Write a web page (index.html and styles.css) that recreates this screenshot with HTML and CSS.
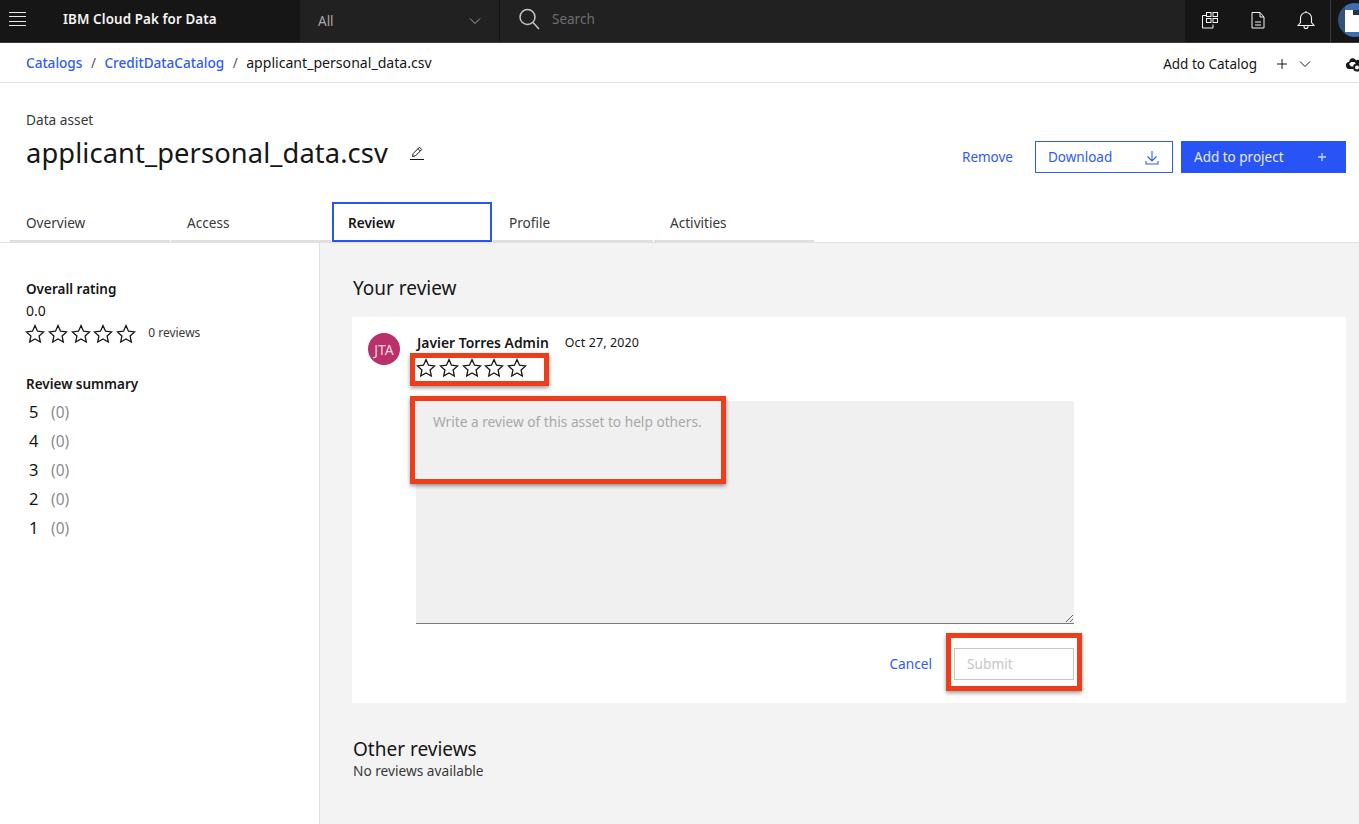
FILE: index.html
```html
<!DOCTYPE html>
<html lang="en">
<head>
<meta charset="utf-8">
<title>applicant_personal_data.csv</title>
<link rel="stylesheet" href="styles.css">
</head>
<body>
<svg class="defs" width="0" height="0" aria-hidden="true">
  <symbol id="star" viewBox="0 0 20 20"><path d="M10 1.6l2.5 5.6 6.1.7-4.5 4.1 1.2 6-5.3-3-5.3 3 1.2-6L1.400 7.900l6.100-.7z" fill="none" stroke="currentColor" stroke-width="1.300" stroke-linejoin="miter"/></symbol>
</svg>
<header class="topbar">
  <div class="brand-area">
    <button class="menu-btn" aria-label="Menu"><span></span><span></span><span></span><span></span></button>
    <span class="brand">IBM Cloud Pak for Data</span>
  </div>
  <div class="scope"><span>All</span>
    <svg width="12" height="8" viewBox="0 0 12 8"><path d="M1 1.500l5 5 5-5" fill="none" stroke="#a8a8a8" stroke-width="1"/></svg>
  </div>
  <div class="search">
    <svg width="24" height="24" viewBox="0 0 24 24"><circle cx="10.500" cy="10" r="7.500" fill="none" stroke="#c6c6c6" stroke-width="1.500"/><path d="M16 15.500l6 6.500" stroke="#c6c6c6" stroke-width="1.500"/></svg>
    <span>Search</span>
  </div>
  <div class="top-icons">
    <svg class="tic" width="20" height="20" viewBox="0 0 20 20" fill="none" stroke="#f4f4f4" stroke-width="1"><path d="M6 5.500H2.500v12.500H13v-3.500"/><rect x="6.500" y="2.500" width="4.500" height="4"/><rect x="13" y="2.500" width="4.500" height="4"/><rect x="6.500" y="8.500" width="4.500" height="4"/><rect x="13" y="8.500" width="4.500" height="4"/></svg>
    <svg class="tic" width="20" height="20" viewBox="0 0 20 20" fill="none" stroke="#f4f4f4" stroke-width="1"><path d="M4 2.500h8l4 4.500v11H4zM12 2.500V7h4M7 12h6M7 15h6"/></svg>
    <svg class="tic" width="20" height="20" viewBox="0 0 20 20" fill="none" stroke="#f4f4f4" stroke-width="1.100"><path d="M2 15.500l2.500-3V8a5.500 5.500 0 0 1 11 0v4.500l2.500 3zM8 15.500v1a2 2 0 0 0 4 0v-1M10 1v1.500"/></svg>
    <div class="avatar-wrap"><div class="user-pic"></div></div>
  </div>
</header>

<nav class="crumbs">
  <div class="crumb-list">
    <a class="link strong" href="#">Catalogs</a><span class="sep">/</span>
    <a class="link strong" href="#">CreditDataCatalog</a><span class="sep">/</span>
    <span class="crumb-current">applicant_personal_data.csv</span>
  </div>
  <div class="crumb-actions">
    <span>Add to Catalog</span>
    <svg class="plus" width="12" height="12" viewBox="0 0 12 12"><path d="M6 1v10M1 6h10" stroke="#161616" stroke-width="1"/></svg>
    <svg class="chev" width="12" height="8" viewBox="0 0 12 8"><path d="M1 1.500l5 5 5-5" fill="none" stroke="#161616" stroke-width="1"/></svg>
    <svg class="cloud" width="16" height="16" viewBox="0 0 16 16"><path d="M5 3.500a3.500 3.500 0 0 1 6 1A3 3 0 0 1 16 7v1h-5l-1.500-2H6L4 8l2 2.500h2V13H5a3.500 3.500 0 0 1-1-7z" fill="#161616"/><circle cx="12" cy="11.500" r="3" fill="none" stroke="#161616" stroke-width="2"/></svg>
  </div>
</nav>

<section class="asset-head">
  <div class="asset-title">
    <div class="eyebrow">Data asset</div>
    <div class="title-row">
      <h1>applicant_personal_data.csv</h1>
      <svg width="16" height="16" viewBox="0 0 16 16" fill="none" stroke="#161616" stroke-width="1"><path d="M1 14.500h14M3.500 11.500l.7-3L10.500 2.200l2.300 2.300-6.300 6.300zM9 3.700l2.300 2.300"/></svg>
    </div>
  </div>
  <div class="asset-actions">
    <a class="link remove" href="#">Remove</a>
    <button class="btn btn-outline">Download
      <svg width="14" height="15" viewBox="0 0 14 15" fill="none" stroke="#2f5cf5" stroke-width="1.100"><path d="M7 1v10M2.500 6.500L7 11l4.500-4.500M1 11v3h12v-3"/></svg>
    </button>
    <button class="btn btn-primary">Add to project
      <svg width="10" height="10" viewBox="0 0 10 10"><path d="M5 1v8M1 5h8" stroke="#c9d5ff" stroke-width="1.300"/></svg>
    </button>
  </div>
</section>

<div class="tabs">
  <div class="tab">Overview</div>
  <div class="tab">Access</div>
  <div class="tab active">Review</div>
  <div class="tab">Profile</div>
  <div class="tab">Activities</div>
</div>

<main class="content">
  <aside class="side">
    <h3>Overall rating</h3>
    <div class="score">0.0</div>
    <div class="rating-row">
      <div class="stars">
        <svg><use href="#star"/></svg><svg><use href="#star"/></svg><svg><use href="#star"/></svg><svg><use href="#star"/></svg><svg><use href="#star"/></svg>
      </div>
      <span class="count">0 reviews</span>
    </div>
    <h3 class="summary-head">Review summary</h3>
    <ul class="summary">
      <li><b>5</b><span>(0)</span></li>
      <li><b>4</b><span>(0)</span></li>
      <li><b>3</b><span>(0)</span></li>
      <li><b>2</b><span>(0)</span></li>
      <li><b>1</b><span>(0)</span></li>
    </ul>
  </aside>
  <section class="reviews">
    <h2>Your review</h2>
    <div class="card">
      <div class="avatar">JTA</div>
      <div class="form">
        <div class="who"><strong>Javier Torres Admin</strong><span>Oct 27, 2020</span></div>
        <div class="stars form-stars">
          <svg><use href="#star"/></svg><svg><use href="#star"/></svg><svg><use href="#star"/></svg><svg><use href="#star"/></svg><svg><use href="#star"/></svg>
        </div>
        <textarea class="review-box" placeholder="Write a review of this asset to help others."></textarea>
        <div class="form-actions">
          <a class="link" href="#">Cancel</a>
          <button class="submit" disabled>Submit</button>
        </div>
      </div>
    </div>
    <h2 class="other">Other reviews</h2>
    <p class="none">No reviews available</p>
  </section>
</main>

<div class="mark mark-stars"></div>
<div class="mark mark-text"></div>
<div class="mark mark-submit"></div>
</body>
</html>
```
FILE: styles.css
```css
* { box-sizing: border-box; }
html, body { margin: 0; height: 100%; overflow: hidden; }
body {
  position: relative;
  width: 1359px;
  height: 824px;
  background: #fff;
  color: #161616;
  font-family: "Noto Sans", Roboto, sans-serif;
  font-size: 14px;
}
.defs { position: absolute; }
a { text-decoration: none; }
.link { color: #2f5cf5; }
.strong { font-weight: 500; font-size: 13.6px; }

.topbar { display: flex; height: 43px; background: #161616; border-bottom: 1px solid #3a3a3a; color: #f4f4f4; }
.brand-area { flex: 0 0 300px; display: flex; align-items: center; padding-bottom: 4px; }
.menu-btn { width: 17px; height: 14px; margin-left: 9px; padding: 0; border: 0; background: none; display: flex; flex-direction: column; justify-content: space-between; }
.menu-btn span { display: block; height: 1px; background: #e8e8e8; }
.brand { margin-left: 37px; font-size: 13.4px; font-weight: 600; letter-spacing: .1px; }
.scope { flex: 0 0 200px; display: flex; align-items: center; justify-content: space-between; padding: 0 18px 1px 18px; background: #212121; color: #a8a8a8; font-size: 13.5px; border-right: 1px solid #141414; }
.search { flex: 0 0 685px; display: flex; align-items: center; gap: 11px; padding: 0 0 4px 17px; background: #212121; color: #6f6f6f; font-size: 13.5px; }
.top-icons { flex: 1; display: flex; align-items: center; padding-left: 15px; min-width: 0; }
.tic { flex: none; margin-right: 28px; margin-top: -3px; }
.avatar-wrap { height: 42px; margin-left: -14px; padding: 3px 0 0 7px; border-left: 1px solid #3a3a3a; overflow: hidden; flex: 1; }
.user-pic {
  width: 34px; height: 34px; border-radius: 50%;
  background:
    linear-gradient(#24364a, #24364a) 15px 7px / 20px 5px no-repeat,
    linear-gradient(#fff, #fff) 7px 7px / 30px 22px no-repeat,
    linear-gradient(90deg, #33527a 0 7px, #3d6cb0 7px);
}

.crumbs { height: 40px; display: flex; justify-content: space-between; align-items: center; padding: 0 0 0 26px; border-bottom: 1px solid #e0e0e0; }
.crumb-list { display: flex; align-items: center; font-size: 13.5px; }
.crumb-current { font-size: 14.1px; }
.sep { margin: 0 8.500px; color: #525252; }
.crumb-actions { display: flex; align-items: center; font-size: 13.5px; margin-right: -2px; padding: 2px 0 0 3px; }
.plus { margin-left: 19px; }
.chev { margin-left: 11px; }
.cloud { margin-left: 34px; }

.asset-head { height: 117px; display: flex; justify-content: space-between; padding: 29px 13px 0 26px; }
.eyebrow { font-size: 13.7px; color: #393939; line-height: 16px; }
.title-row { display: flex; align-items: center; gap: 21px; margin-top: 7px; }
h1 { margin: 0; font-size: 27.3px; font-weight: 400; line-height: 36px; letter-spacing: .1px; }
.asset-actions { display: flex; align-items: center; height: 32px; margin-top: 29px; font-size: 13.5px; }
.remove { margin-right: 22px; }
.btn { height: 32px; display: flex; align-items: center; justify-content: space-between; font: inherit; padding: 0 13px 0 12px; }
.btn-outline { width: 138px; margin-right: 8px; background: #fff; border: 1px solid #2f5cf5; color: #2f5cf5; }
.btn-primary { width: 165px; background: #2954f5; border: 0; color: #e6ebff; padding: 0 19px 0 13px; }

.tabs { display: flex; gap: 1px; height: 43px; padding-left: 10px; border-bottom: 1px solid #e0e0e0; }
.tab { width: 160px; height: 42px; padding: 14px 16px 0; border-bottom: 2px solid #e0e0e0; font-size: 13.6px; color: #393939; line-height: 18px; }
.tab.active { height: 40px; margin-top: 2px; border: 2px solid #2954f5; padding: 10px 14px 0; font-weight: 600; color: #161616; background: #fff; }

.content { display: flex; height: 582px; }
.side { width: 320px; padding: 37px 0 0 26px; border-right: 1px solid #e0e0e0; }
h3 { margin: 0; font-size: 13.5px; font-weight: 600; line-height: 18px; }
.score { font-size: 14px; line-height: 18px; margin-top: 4px; }
.rating-row { display: flex; align-items: center; gap: 12px; margin: 4px 0 0 -1px; }
.stars { display: flex; gap: 2.800px; color: #161616; }
.stars svg { width: 20px; height: 20px; display: block; }
.count { font-size: 12px; color: #393939; margin-top: -4px; }
.summary-head { margin-top: 31px; }
.summary { list-style: none; margin: 4px 0 0; padding: 0 0 0 3px; }
.summary li { display: flex; gap: 14px; height: 29px; align-items: center; font-size: 16.500px; }
.summary b { font-weight: 400; width: 8px; }
.summary span { color: #8d8d8d; font-size: 15.5px; }

.reviews { flex: 1; background: #f3f3f3; padding: 32px 13px 0 32px; }
h2 { margin: 0 0 0 1px; font-size: 19px; font-weight: 400; line-height: 26px; }
.card { display: flex; height: 386px; margin-top: 16px; padding: 16px 0 0 16px; background: #fff; }
.avatar { width: 32px; height: 32px; border-radius: 50%; background: #b9306a; color: #f5d5e2; font-size: 14px; display: flex; align-items: center; justify-content: center; }
.form { width: 658px; margin-left: 16px; }
.who { display: flex; align-items: center; gap: 16px; height: 18px; padding-left: 1px; font-size: 12.4px; letter-spacing: .15px; }
.who strong { font-size: 13.9px; font-weight: 600; letter-spacing: 0; }
.form-stars { margin-top: 7px; }
.review-box { display: block; width: 658px; height: 223px; margin-top: 23px; padding: 11px 17px; background: #f0f0f0; border: 0; border-bottom: 1px solid #7a7a7a; border-radius: 0; font: 13.7px "Noto Sans", Roboto, sans-serif; }
.review-box::placeholder { color: #a8a8a8; opacity: 1; }
.form-actions { display: flex; justify-content: flex-end; align-items: center; gap: 22px; margin-top: 24px; font-size: 13.7px; }
.form-actions .link { margin-top: -2px; }
.submit { width: 120px; height: 32px; text-align: left; padding: 0 12px 2px; background: #fff; border: 1px solid #c6c6c6; color: #c6c6c6; font: inherit; }
.other { margin-top: 33px; }
.none { margin: 0 0 0 1px; font-size: 13.7px; line-height: 18px; color: #393939; }

.mark { position: absolute; border: 5px solid #ee3d1b; box-shadow: 0 2px 4px rgba(0,0,0,.4); }
.mark-stars { left: 410px; top: 353px; width: 139px; height: 33px; }
.mark-text { left: 410px; top: 396px; width: 316px; height: 88px; }
.mark-submit { left: 946px; top: 633px; width: 136px; height: 58px; }
```
